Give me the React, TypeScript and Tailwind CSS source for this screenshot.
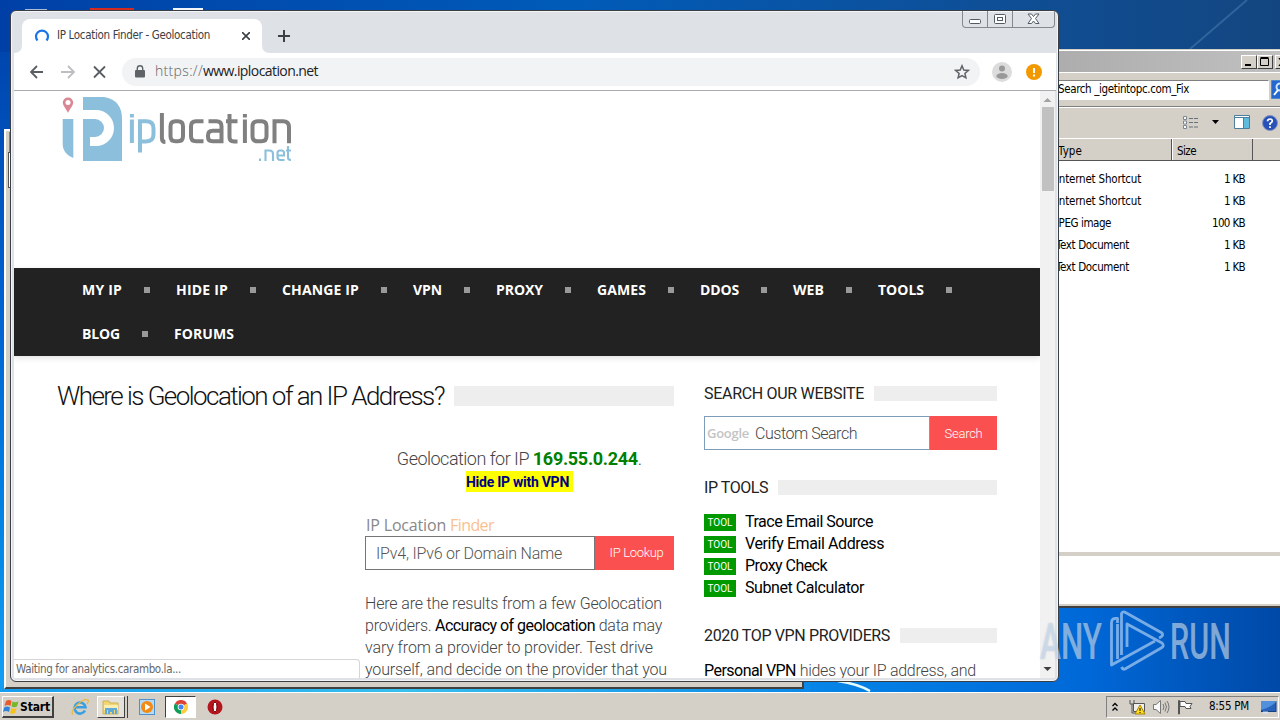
import React, { useLayoutEffect, useRef } from "react";

/** One line of text whose letter spacing is spread so that the line is `w` pixels wide. */
function Fit({ w, className = "", children }: { w: number; className?: string; children: string }) {
  const ref = useRef<HTMLSpanElement>(null);
  useLayoutEffect(() => {
    const el = ref.current;
    if (!el) return;
    el.style.letterSpacing = "0px";
    const natural = el.getBoundingClientRect().width;
    el.style.letterSpacing = `${(w - natural) / children.length}px`;
  }, [w, children]);
  return (
    <span ref={ref} className={`inline-block whitespace-pre ${className}`}>
      {children}
    </span>
  );
}

const UI = "font-['DejaVu_Sans_Condensed','DejaVu_Sans',sans-serif] [font-stretch:condensed]";

const navRows: [string, number][][] = [
  [
    ["MY IP", 40],
    ["HIDE IP", 52],
    ["CHANGE IP", 77],
    ["VPN", 29],
    ["PROXY", 47],
    ["GAMES", 49],
    ["DDOS", 39],
    ["WEB", 31],
    ["TOOLS", 46],
  ],
  [
    ["BLOG", 38],
    ["FORUMS", 60],
  ],
];

function Nav() {
  return (
    <nav className="h-[88px] bg-[#222] pl-[68px] font-['Open_Sans',sans-serif] text-[14px] font-bold text-white shadow-[0_2px_6px_rgba(0,0,0,0.12)]">
      {navRows.map((row, r) => (
        <div key={r} className="flex h-11 items-center">
          {row.map(([label, w]) => (
            <div key={label} className="flex items-center">
              <Fit w={w} className="pb-[2px]">{label}</Fit>
              {label !== "FORUMS" && <i className="mr-[26px] ml-[22px] size-1.5 bg-[#999]" />}
            </div>
          ))}
        </div>
      ))}
    </nav>
  );
}

function Logo() {
  return (
    <div className="flex h-[177px] pt-[6px] pl-12">
      <svg width="232" height="68" viewBox="62 97 232 68">
        <path d="M68 97.5a5 5 0 0 0-5.2 5c0 3.6 3.6 6.5 5.2 10.500 1.600-4 5.200-6.900 5.200-10.500a5 5 0 0 0-5.200-5z" fill="#db8793" />
        <circle cx="68" cy="102.600" r="2.500" fill="#fff" />
        <path d="M62.700 119H73.300V158C66 155 62.700 150 62.700 144z" fill="#8bbfdb" />
        <path d="M83 97H104Q122 100 122 119V161H83z" fill="#8bbfdb" />
        <path d="M83 110h13a18 18 0 0 1 0 36h-6v-9h5a9 9 0 0 0 0-18H83z" fill="#fff" />
        <g fill="none" strokeWidth="4">
          <path d="M131.900 119.500V143M131.900 114v3.500M140 152.500V121.200h6q7.500 0 7.500 7v6q0 7.200-7.500 7.200h-6" stroke="#8bbfdb" />
          <path
            d="M161.900 113V138q0 4 3.500 4M175.500 121.300q-5 0-5 5v10q0 5 5 5h2.500q5 0 5-5v-10q0-5-5-5zM203.500 121.300h-7.500q-5 0-5 5v10q0 5 5 5h7.500M208.500 121.300h8q5 0 5 5v15h-9q-4.500 0-4.500-4.500v-1.500q0-4.500 4.500-4.500h9M229.500 114v23q0 4.500 4.500 4.500h3.500M226 121.300h11.500M244.900 119.500V143M244.900 114v3.500M257.500 121.300q-5 0-5 5v10q0 5 5 5h4q5 0 5-5v-10q0-5-5-5zM274.500 143.300V121.300h8.500q6 0 6 6v16"
            stroke="#808080"
          />
          <path d="M260 158.500v2.500M265.500 161V150.500h4q3.500 0 3.500 3.500v7M277.500 155.500h6.500V153q0-2.500-2.500-2.500h-1.500q-2.500 0-2.500 2.500v4q0 3 3 3h4M286 150.500h5M288 146v11.500q0 2.500 3 2.500" stroke="#8bbfdb" strokeWidth="2.100" />
        </g>
      </svg>
    </div>
  );
}

function SideHead({ w, children, className = "" }: { w: number; children: string; className?: string }) {
  return (
    <div className={`flex h-[22px] items-center gap-[10px] text-[16px] text-[#222] ${className}`}>
      <Fit w={w}>{children}</Fit>
      <i className="mb-px h-[15px] flex-1 bg-[#eee]" />
    </div>
  );
}

const tools: [string, number][] = [
  ["Trace Email Source", 128],
  ["Verify Email Address", 139],
  ["Proxy Check", 82],
  ["Subnet Calculator", 119],
];

function Page() {
  return (
    <div className="h-[587px] w-[1026px] overflow-hidden bg-white font-['Roboto',sans-serif]">
      <Logo />
      <Nav />
      <div className="flex gap-[30px] pl-[43px]">
        <main className="w-[617px] text-[16px] leading-[22px] font-light text-[#444]">
          <div className="mt-[25px] flex h-[30px] items-center gap-[10px]">
            <Fit w={387} className="pb-px text-[26px] text-[#111]">Where is Geolocation of an IP Address?</Fit>
            <i className="h-5 flex-1 bg-[#eee]" />
          </div>
          <div className="ml-[308px]">
            <div className="mt-[37px] flex h-[22px] items-center justify-center text-[18px]">
              <Fit w={136}>{"Geolocation for IP "}</Fit>
              <Fit w={105} className="font-bold text-[#008000]">169.55.0.244</Fit>.
            </div>
            <div className="flex h-[22px] justify-center pt-px">
              <div className="flex h-[21px] w-[107px] items-center bg-[#ff0]">
                <Fit w={103} className="text-[14px] font-bold text-[#000080]">Hide IP with VPN</Fit>
              </div>
            </div>
            <div className="mt-[22px] flex h-[22px] items-center pl-px font-['Open_Sans',sans-serif] font-normal">
              <Fit w={84} className="text-[#888]">{"IP Location "}</Fit>
              <Fit w={44} className="text-[#fac090]">Finder</Fit>
            </div>
            <div className="flex h-[34px]">
              <div className="flex w-[230px] items-center border border-[#767676] pt-px pl-[10px] text-[#555]">
                <Fit w={186}>IPv4, IPv6 or Domain Name</Fit>
              </div>
              <div className="flex flex-1 items-center justify-center bg-[#fa5050] pl-1 text-[13px] text-white">
                <Fit w={54}>IP Lookup</Fit>
              </div>
            </div>
            <div className="mt-[23px] flex flex-col items-start">
              <Fit w={297}>Here are the results from a few Geolocation</Fit>
              <div>
                <Fit w={70}>{"providers. "}</Fit>
                <Fit w={160} className="font-normal text-black">Accuracy of geolocation</Fit>
                <Fit w={67}>{" data may"}</Fit>
              </div>
              <Fit w={288}>vary from a provider to provider. Test drive</Fit>
              <Fit w={302}>yourself, and decide on the provider that you</Fit>
            </div>
          </div>
        </main>
        <aside className="w-[293px] text-[16px] leading-[22px]">
          <SideHead w={160} className="mt-[27px]">SEARCH OUR WEBSITE</SideHead>
          <div className="mt-[11px] flex h-[34px]">
            <div className="flex w-[226px] items-center border border-[#7e9db9] pl-[2px]">
              <Fit w={42} className="font-['Open_Sans',sans-serif] text-[13px] font-semibold text-[#c4c4c4]">Google</Fit>
              <Fit w={102} className="ml-[6px] pt-px font-light text-[#444]">Custom Search</Fit>
            </div>
            <div className="flex flex-1 items-center justify-center bg-[#fa5050] pt-px text-[13px] font-light text-white">
              <Fit w={38}>Search</Fit>
            </div>
          </div>
          <SideHead w={64} className="mt-[27px]">IP TOOLS</SideHead>
          <ul className="mt-3 text-black">
            {tools.map(([label, w]) => (
              <li key={label} className="flex h-[22px] items-center">
                <span className="mr-[9px] flex h-[17px] w-8 items-center justify-center bg-[#090] pt-px text-[10px] text-white">
                  <Fit w={25}>TOOL</Fit>
                </span>
                <Fit w={w}>{label}</Fit>
              </li>
            ))}
          </ul>
          <SideHead w={186} className="mt-[26px]">2020 TOP VPN PROVIDERS</SideHead>
          <div className="mt-3 pt-px whitespace-nowrap">
            <Fit w={92} className="text-black">Personal VPN</Fit>
            <Fit w={180} className="font-light text-[#444]">{" hides your IP address, and"}</Fit>
          </div>
        </aside>
      </div>
    </div>
  );
}

function ScrollBar() {
  return (
    <div className="flex h-[587px] w-[15px] flex-col items-center justify-between bg-[#f1f1f1]">
      <div className="flex flex-col items-center">
        <svg width="15" height="16">
          <path d="M3.500 11h8L7.500 7z" fill="#a3a3a3" />
        </svg>
        <div className="h-[84px] w-3 bg-[#c1c1c1]" />
      </div>
      <svg width="15" height="16">
        <path d="M3.500 5h8L7.500 9z" fill="#404040" />
      </svg>
    </div>
  );
}

function Browser() {
  return (
    <div className="absolute top-[10px] left-[10px] h-[672px] w-[1049px] overflow-hidden rounded-md border border-[#3a3f46] bg-[#dee1e6] shadow-[inset_0_0_0_1px_#f4f5f7]">
      <div className="flex h-[42px] items-end pl-[3px]">
        <svg width="8" height="8">
          <path d="M8 0V8H0Q8 8 8 0" fill="#fff" />
        </svg>
        <div className="flex h-[34px] w-[240px] items-center rounded-t-lg bg-white pl-3">
          <svg width="16" height="16" fill="none" stroke="#1a73e8" strokeWidth="2.200">
            <path d="M3.500 12.500A6 6 0 1 1 12.500 12.500" />
          </svg>
          <Fit w={153} className={`ml-[7px] text-[11.5px] text-[#3c4043] ${UI}`}>IP Location Finder - Geolocation</Fit>
          <svg className="ml-[32px]" width="8" height="8" stroke="#3c4043" strokeWidth="1.600">
            <path d="M0 0 8 8M8 0 0 8" />
          </svg>
        </div>
        <svg width="8" height="8">
          <path d="M0 0V8H8Q0 8 0 0" fill="#fff" />
        </svg>
        <svg className="mb-[11px] ml-2" width="12" height="12" stroke="#3c4043" strokeWidth="2">
          <path d="M6 0V12M0 6H12" />
        </svg>
        <div className="mr-[3px] mb-auto ml-auto flex h-[17px] rounded-b border border-t-0 border-[#85888d]">
          <svg width="91" height="16" fill="#fff" stroke="#555b64">
            <path d="M24.500 0V16M49.500 0V16" stroke="#85888d" />
            <rect x="6.500" y="8.500" width="11" height="4" rx="1" />
            <rect x="31.500" y="3.500" width="11" height="9" rx="1" />
            <rect x="34.500" y="6.500" width="5" height="3" />
            <path d="M65 3h3.500l2 2.500 2-2.500H76l-3.500 4.500L76 12.500h-3.500l-2-2.500-2 2.500H65l3.500-5z" />
          </svg>
        </div>
      </div>
      <div className="mr-[2px] ml-[3px] flex h-[38px] items-center border-b border-[#a8abae] bg-white">
        <svg className="ml-4 shrink-0" width="80" height="16" fill="none" stroke="#5a5e63" strokeWidth="1.800">
          <path d="M13 8H1M7 2 1 8l6 6" />
          <path d="M31 8H44M38 2l6 6-6 6" stroke="#bcbec1" />
          <path d="M64 2.500 75 13.500M75 2.500 64 13.500" />
        </svg>
        <div className="ml-[12px] flex h-7 w-[858px] shrink-0 items-center rounded-full bg-[#f1f3f4] pl-[13px]">
          <svg width="10" height="13" viewBox="0 0 10 13">
            <rect y="5" width="10" height="7.500" rx="1" fill="#5f6368" />
            <path d="M2.300 5V3.500a2.700 2.700 0 0 1 5.400 0V5" fill="none" stroke="#5f6368" strokeWidth="1.400" />
          </svg>
          <Fit w={48} className="ml-[10px] pb-[2px] font-['Open_Sans',sans-serif] text-[14px] font-light text-[#5f6368]">https://</Fit>
          <Fit w={115} className="pb-[2px] font-['Open_Sans',sans-serif] text-[14px] text-[#202124]">www.iplocation.net</Fit>
          <svg className="mr-[10px] ml-auto" width="16" height="16" viewBox="0 0 16 16" fill="none" stroke="#5f6368" strokeWidth="1.500">
            <path d="M8 1.800 9.800 6l4.500.4-3.400 3 1 4.400L8 11.500l-3.900 2.300 1-4.400-3.400-3L6.200 6z" />
          </svg>
        </div>
        <svg className="ml-3 shrink-0" width="20" height="20">
          <circle cx="10" cy="10" r="10" fill="#dcdcdc" />
          <circle cx="10" cy="6.500" r="3" fill="#999" />
          <ellipse cx="10" cy="14" rx="5.700" ry="3" fill="#999" />
        </svg>
        <svg className="ml-[14px] shrink-0" width="16" height="16">
          <circle cx="8" cy="8" r="8" fill="#f29900" />
          <path d="M8 4V9M8 10.500V12.500" stroke="#fff" strokeWidth="2" />
        </svg>
      </div>
      <div className="ml-[3px] flex">
        <Page />
        <ScrollBar />
      </div>
      <div className="absolute bottom-[3px] left-[3px] flex h-[19px] w-[346px] items-center rounded-tr border-t border-r border-[#d5d5d8] bg-white pt-px pl-[2px]">
        <Fit w={165} className={`text-[11.5px] text-[#666] ${UI}`}>Waiting for analytics.carambo.la...</Fit>
      </div>
    </div>
  );
}

const files: [string, number, string, number][] = [
  ["Internet Shortcut", 85, "1 KB", 21],
  ["Internet Shortcut", 85, "1 KB", 21],
  ["JPEG image", 55, "100 KB", 33],
  ["Text Document", 73, "1 KB", 21],
  ["Text Document", 73, "1 KB", 21],
];

function Explorer() {
  const btn = "flex h-[14px] w-4 shrink-0 items-center justify-center border border-t-white border-l-white border-r-[#404040] border-b-[#404040] bg-[#d4d0c8]";
  return (
    <div className={`absolute top-[49px] left-[1000px] flex h-[559px] w-[280px] flex-col overflow-hidden border-t border-b-2 border-[#d4d0c8] border-b-[#404040] bg-[#d4d0c8] text-[11.5px] text-black ${UI}`}>
      <div className="flex h-[22px] shrink-0 items-center border-t border-white bg-linear-to-r from-[#a8a8a8] to-[#c0c0c0] pl-[241px]">
        <div className={btn}>
          <svg width="10" height="8"><path d="M1 7H7" stroke="#000" strokeWidth="2" /></svg>
        </div>
        <div className={btn}>
          <svg width="10" height="10" fill="none" stroke="#000"><path d="M.5 1.500h8v7h-8zM.5.5h8" /></svg>
        </div>
        <div className={`${btn} ml-[2px]`}>
          <svg width="10" height="8" stroke="#000" strokeWidth="1.500"><path d="M1 0 9 8M9 0 1 8" /></svg>
        </div>
      </div>
      <div className="flex h-[34px] shrink-0 items-center border-t border-white pl-[57px]">
        <div className="flex h-5 w-[212px] shrink-0 items-center border border-[#808080] border-r-white border-b-white bg-white pt-px">
          <Fit w={131}>Search _igetintopc.com_Fix</Fit>
        </div>
        <svg className="ml-[2px] shrink-0" width="18" height="19">
          <rect width="18" height="19" fill="#2468cf" stroke="#7ac" />
          <circle cx="9" cy="7" r="3.500" fill="none" stroke="#cfe6ff" strokeWidth="2" />
          <path d="M7 10 3 15" stroke="#fff" strokeWidth="2" />
        </svg>
      </div>
      <div className="flex h-[32px] shrink-0 items-center border-t border-[#808080] shadow-[inset_0_1px_0_#fff]">
        <svg className="ml-[183px]" width="17" height="14" fill="none">
          <path d="M.5.500h3v3h-3zM.5 5h3v3h-3zM.5 9.500h3v3h-3z" fill="#fff" stroke="#7d8791" />
          <path d="M6 2.500h9M6 6.500h9M6 11h9" stroke="#66717c" strokeDasharray="4 1" />
        </svg>
        <svg className="ml-[12px]" width="8" height="5"><path d="M0 0H7L3.500 4z" fill="#000" /></svg>
        <svg className="ml-[14px]" width="17" height="15">
          <path d="M.5.500h15v13H.5z" fill="#fff" stroke="#4d7e9c" />
          <path d="M10 3h5v10h-5z" fill="#5ebbdc" />
          <path d="M1 2.500h14M9.500 3v10" stroke="#4d7e9c" />
        </svg>
        <svg className="ml-[11px]" width="16" height="16">
          <circle cx="8" cy="8" r="7.500" fill="#2750b8" stroke="#8293bd" />
          <path d="M5.500 6.300Q5.700 4 8 4t2.300 2.100Q10.300 7.500 8 8.500V10M8 11.200v1.800" fill="none" stroke="#fff" strokeWidth="1.700" />
        </svg>
      </div>
      <div className="flex h-[23px] shrink-0 border-t border-b border-t-white border-b-[#555] leading-[24px]">
        <div className="w-[172px] border-r border-[#555] pl-[58px]"><Fit w={24}>Type</Fit></div>
        <div className="w-[81px] border-r border-l border-l-white border-r-[#555] pl-1"><Fit w={19}>Size</Fit></div>
      </div>
      <div className="h-[391px] shrink-0 bg-white pt-[8px]">
        {files.map(([type, w, size, sw], i) => (
          <div key={i} className="flex h-[22px] w-[245px] items-center justify-between pl-[56px]">
            <Fit w={w}>{type}</Fit>
            <Fit w={sw}>{size}</Fit>
          </div>
        ))}
      </div>
      <div className="mt-[4px] h-[48px] shrink-0 bg-white" />
    </div>
  );
}

function Watermark() {
  return (
    <div className="absolute top-[606px] left-[1036px] h-[70px] w-[198px]">
      <svg className="opacity-60" width="198" height="70" viewBox="1036 606 198 70" fill="none" stroke="#c9e0fa" strokeWidth="2.800" strokeLinejoin="round">
        <path d="M1117.500 623V618.500q-6-1-6 4V665L1155 641" />
        <path d="M1117.500 624V659" />
        <path d="M1127 647V624L1162 643q2.500 2.500 0 4.500L1125 669q-2 1-3.500-2" />
        <path d="M1121.500 655V613.500q1.500-2.500 4-1L1162 633q2 3-3 5" />
      </svg>
      <div className="absolute top-[6px] left-1 flex h-[60px] w-[194px] items-center font-['Roboto',sans-serif] text-[50px] leading-none font-medium text-[#c9e0fa]/60 [text-shadow:0_0_2px_rgba(90,90,90,0.25)]">
        <span className="w-[131px] origin-left scale-x-[0.63] whitespace-nowrap">ANY</span>
        <span className="w-[64px] origin-left scale-x-[0.61] whitespace-nowrap">RUN</span>
      </div>
    </div>
  );
}

function Taskbar() {
  return (
    <div className={`absolute top-[692px] left-0 flex h-7 w-[1280px] items-center border-t border-white bg-[#d4d0c8] pt-px text-[11.5px] text-black ${UI}`}>
      <div className="ml-[2px] flex h-[22px] w-[52px] items-center border border-r-2 border-b-2 border-t-white border-r-[#404040] border-b-[#404040] border-l-white">
        <svg width="17" height="16" viewBox="0 0 17 16">
          <path d="M3 2q3-2 5.500 0L7.500 7Q5 5 1.500 7z" fill="#e8592b" />
          <path d="M9.500 2.500q3 1.500 6 0L14 7.500q-3 1.500-5.500 0z" fill="#76b72c" />
          <path d="M1.200 8.500q3-2 5.800 0L6 13q-3-2-6 0z" fill="#2f82d8" />
          <path d="M8.200 9q3 1.500 5.500 0l-1.500 5q-3 1.500-5.200 0z" fill="#f7c21b" />
        </svg>
        <Fit w={30} className="pt-px text-[12px] font-bold">Start</Fit>
      </div>
      <svg className="ml-[17px]" width="18" height="18" viewBox="0 0 18 18" fill="none">
        <path d="M14 12.500A5.500 5.500 0 1 1 14.500 9.200H4.500" stroke="#3a9fe0" strokeWidth="2.600" />
        <path d="M2 16.500Q-1 14 6 7t11-5q1 1-1 4" stroke="#e8b83a" strokeWidth="1.200" />
      </svg>
      <div className="ml-2 flex h-[22px] w-[28px] items-center justify-center border border-t-white border-r-[#404040] border-b-[#404040] border-l-white bg-[#e4e1db]">
        <svg width="18" height="18">
          <path d="M1 3h6l1 2h8v11H1z" fill="#f1d773" stroke="#d1b04c" />
          <path d="M2 7H16V12H2z" fill="#faeeb0" />
          <path d="M4 16v-5h10v5M7 16v-3h4v3" fill="none" stroke="#61a9d6" strokeWidth="2" />
        </svg>
      </div>
      <i className="ml-px h-[22px] w-[2px] border-r border-[#404040]" />
      <svg className="ml-[11px]" width="17" height="17">
        <rect x=".5" y=".5" width="15" height="15" fill="#b6daf4" stroke="#4e91cb" />
        <circle cx="8" cy="8" r="6" fill="#f28a16" />
        <path d="M6 4.500 11.500 8 6 11.500z" fill="#fff" />
      </svg>
      <div className="ml-[9px] flex h-[22px] w-[31px] items-center justify-center border border-t-[#404040] border-r-white border-b-white border-l-[#404040] bg-white">
        <svg width="14" height="14" viewBox="0 0 14 14">
          <path d="M7 7 .9 3.500A7 7 0 0 1 13.100 3.500z" fill="#db4437" />
          <path d="M7 7 13.100 3.500A7 7 0 0 1 7 14z" fill="#ffcd40" />
          <path d="M7 7V14A7 7 0 0 1 .9 3.500z" fill="#0f9d58" />
          <circle cx="7" cy="7" r="3.300" fill="#fff" />
          <circle cx="7" cy="7" r="2.500" fill="#4285f4" />
        </svg>
      </div>
      <svg className="ml-[11px]" width="17" height="17">
        <circle cx="8" cy="8" r="7.500" fill="#b5151c" />
        <ellipse cx="8" cy="8" rx="2" ry="5" fill="#fff" stroke="#700" />
      </svg>
      <div className="mr-px ml-auto flex h-[22px] w-[173px] items-center border border-t-[#808080] border-r-white border-b-white border-l-[#808080]">
        <svg className="ml-[5px]" width="7" height="10" fill="none" stroke="#000" strokeWidth="1.300">
          <path d="M.5 4 3 1.500 5.500 4M.5 8.500 3 6 5.500 8.500" />
        </svg>
        <svg className="ml-[10px]" width="17" height="16">
          <path d="M4.500 4.500h11v8h-11z" fill="#eee" stroke="#555" />
          <path d="M1 1v4h4V1M3 5v9h4" fill="none" stroke="#555" />
          <path d="M11 6 16 15H6z" fill="#ffdf20" stroke="#a98200" />
          <path d="M11 9v3M11 13v1" stroke="#000" />
        </svg>
        <svg className="ml-[7px]" width="17" height="16" fill="none" stroke="#777">
          <path d="M.5 5.500H3L7.500 1.500v13L3 10.500H.5z" fill="#f8f8f8" />
          <path d="M10 5q2 3 0 6M12 3.500q3 4.500 0 9M14 2q4 6 0 12" />
        </svg>
        <svg className="ml-[7px]" width="17" height="16" fill="#fff" stroke="#555">
          <path d="M1.500 15V1.500h1V15zM3 2.500h5l1 2h6l-2 3 1 2H9l-1-2H3z" />
        </svg>
        <Fit w={40} className="ml-[15px]">8:55 PM</Fit>
        <svg className="ml-[12px]" width="16" height="13">
          <rect width="15" height="10.500" fill="#2763bb" stroke="#173f7e" />
          <path d="M0 9Q9 7 15 1V0H0z" fill="#5090dc" />
          <path d="M2 11.500H7" stroke="#d5e4f8" strokeWidth="2" />
        </svg>
      </div>
    </div>
  );
}

export default function App() {
  return (
    <div className="relative h-[720px] w-[1280px] overflow-hidden bg-[#0065d4]">
      <div className="absolute top-0 left-0 h-[692px] w-4 bg-linear-to-b from-[#0040a8] via-[#0067d5] to-[#14a0f4]" />
      <div className="absolute top-[600px] left-[800px] h-[92px] w-[480px] bg-linear-to-r from-[#0786e8] via-[#0068d8] via-60% to-[#0049a7]" />
      <div className="absolute top-[683px] left-0 h-[9px] w-[810px] bg-linear-to-r from-[#139cf0] via-[#36c0ed] to-[#0b88e8]" />
      <div className="absolute top-0 left-0 h-[52px] w-[1280px] bg-linear-to-r from-[#0040a6] via-[#005bb8] via-45% to-[#134680]" />
      <svg className="absolute top-0 left-0" width="1280" height="692">
        <path d="M1190 49 1247 0" stroke="#4d80b4" strokeWidth="2" opacity=".5" />
        <path d="M838 681q20 3 32 10" stroke="#e5fbff" strokeWidth="2.500" fill="none" />
        <path d="M90 9.500h44" stroke="#d52a1e" strokeWidth="3" />
        <path d="M173 9.500h30" stroke="#f3f6fb" strokeWidth="3" />
        <path d="M25 10h22" stroke="#a9bdd9" strokeWidth="2" />
      </svg>
      <div className="absolute top-[129px] left-[4px] h-[560px] w-[800px] border-2 border-t-white border-r-[#404040] border-b-[#404040] border-l-white bg-[#d4d0c8]">
        <div className="mt-px ml-[3px] h-5 w-20 bg-[#808080]" />
        <div className="ml-[2px] h-[36px] w-20 border border-[#555] bg-white" />
      </div>
      <Explorer />
      <Browser />
      <Watermark />
      <Taskbar />
    </div>
  );
}
